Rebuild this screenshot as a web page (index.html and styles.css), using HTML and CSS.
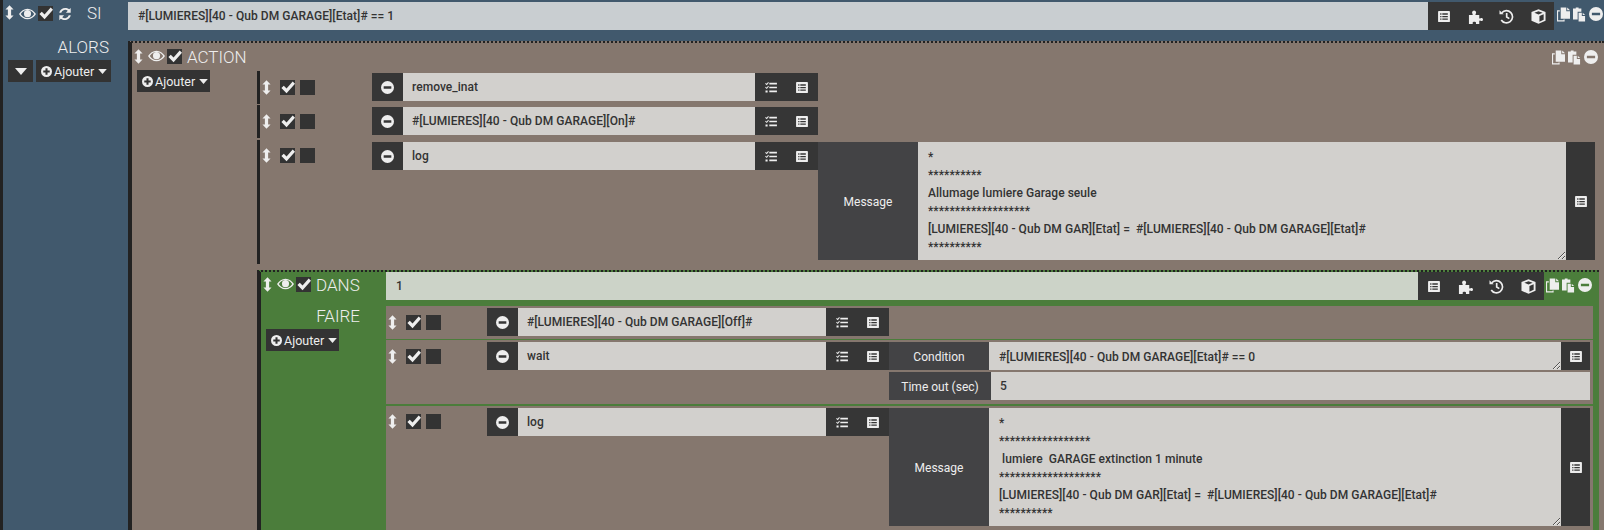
FILE: index.html
```html
<!DOCTYPE html>
<html lang="fr">
<head>
<meta charset="utf-8">
<title>Scénario</title>
<link rel="stylesheet" href="styles.css">
</head>
<body>
<svg class="defs" aria-hidden="true">
  <symbol id="i-handle" viewBox="0 0 10 16"><path d="M5 0 9.500 4.800H6.800v6.400h2.700L5 16 .5 11.200h2.700V4.800H.5z"/></symbol>
  <symbol id="i-eye" viewBox="0 0 24 16"><path fill-rule="evenodd" d="M12 .5C7 .5 3 3.500 0 8c3 4.500 7 7.500 12 7.500S21 12.500 24 8C21 3.500 17 .5 12 .5zM12 2.300c4 0 7 2.200 9.500 5.700-2.500 3.500-5.500 5.700-9.500 5.700S5 11.500 2.500 8C5 4.500 8 2.300 12 2.300z"/><circle cx="12" cy="7.500" r="5"/></symbol>
  <symbol id="i-check" viewBox="0 0 16 16"><path d="M1.500 8.500 4 6l3 3 6.500-7.500L16 4l-9 10z"/></symbol>
  <symbol id="i-refresh" viewBox="0 0 16 16"><path d="M14.500 1v5.500H9l2.200-2.200A4.700 4.700 0 0 0 3.700 6.500H1.400A7 7 0 0 1 12.800 2.700zM1.500 15V9.500H7l-2.200 2.200a4.700 4.700 0 0 0 7.500-2.200h2.300A7 7 0 0 1 3.200 13.300z"/></symbol>
  <symbol id="i-minus" viewBox="0 0 16 16"><path fill-rule="evenodd" d="M8 0a8 8 0 1 0 0 16A8 8 0 0 0 8 0zM3.300 6.500h9.400v3H3.300z"/></symbol>
  <symbol id="i-plus" viewBox="0 0 16 16"><path fill-rule="evenodd" d="M8 0a8 8 0 1 0 0 16A8 8 0 0 0 8 0zM6.500 3.300h3v3.200h3.200v3H9.500v3.200h-3V9.500H3.300v-3h3.200z"/></symbol>
  <symbol id="i-caret" viewBox="0 0 12 7"><path d="M0 0h12L6 7z"/></symbol>
  <symbol id="i-list" viewBox="0 0 14 13"><path fill-rule="evenodd" d="M1 0h12a1 1 0 0 1 1 1v11a1 1 0 0 1-1 1H1a1 1 0 0 1-1-1V1a1 1 0 0 1 1-1zM2.500 2.800v1.500H4V2.800zM5 2.800v1.500h6.500V2.800zM2.500 5.800v1.500H4V5.800zM5 5.800v1.500h6.500V5.800zM2.500 8.800v1.500H4V8.800zM5 8.800v1.500h6.500V8.800z"/></symbol>
  <symbol id="i-tasks" viewBox="0 0 14 13"><path d="M5 1h9v2H5zM5 5.500h9v2H5zM5 10h9v2H5zM0 2l1 -.8 1 1L3.500 0l1 .8L2 3.700zM0 6.500l1-.8 1 1L3.500 4.500l1 .8L2 8.200zM.5 10h2.500v2.500H.5z"/></symbol>
  <symbol id="i-puzzle" viewBox="0 0 16 16"><path d="M1 6.500h3.300c.9 0 .9-.9.4-1.500C3.900 4 4.400 1.500 6.500 1.500S9.100 4 8.300 5c-.5.6-.5 1.500.4 1.500H12v3c0 .8.900.8 1.400.4.900-.7 2.600-.3 2.600 1.300s-1.700 2-2.600 1.300c-.5-.4-1.400-.4-1.400.4V16H8.500v-1.500c0-1.300-3.500-1.300-3.500 0V16H1z"/></symbol>
  <symbol id="i-history" viewBox="0 0 16 16"><path d="M.5 1.200 5 5.700H.5z"/><path class="line" d="M3 4a6.500 6.500 0 1 1-.6 7.700M8.200 4.200v4.300l2.800 1.800"/></symbol>
  <symbol id="i-cube" viewBox="0 0 16 16"><path fill-rule="evenodd" d="M8 .3 15.500 3.300v9.300L8 15.700.5 12.600V3.300zM8 2.300 3.600 4 8 5.800 12.400 4zM9 7.500v6l4.500-2V5.700z"/></symbol>
  <symbol id="i-copy" viewBox="0 0 14 15"><path d="M4 0h6v4h4v8H4z"/><path d="M11 0l3 3h-3z"/><path d="M0 3h3v1.200H1.200v9.600H7V13h1.200v2H0z"/></symbol>
  <symbol id="i-paste" viewBox="0 0 14 15"><path d="M0 1h3V0h3v1h3v3.500H5V13H0z"/><path d="M6 5.500h3.500V9H13v6H6z"/><path d="M10.500 5.500 13 8h-2.500z"/></symbol>
</svg>

<div class="page">
  <div class="si-row">
    <div class="si-ctrl">
      <svg class="ic handle"><use href="#i-handle"/></svg>
      <svg class="ic eye"><use href="#i-eye"/></svg>
      <span class="box"><svg class="ic"><use href="#i-check"/></svg></span>
      <svg class="ic refresh"><use href="#i-refresh"/></svg>
      <span class="si-label">SI</span>
    </div>
    <div class="field field-si">#[LUMIERES][40 - Qub DM GARAGE][Etat]# == 1</div>
    <div class="btns four">
      <span class="btn"><svg class="ic i-sm"><use href="#i-list"/></svg></span>
      <span class="btn"><svg class="ic i-md"><use href="#i-puzzle"/></svg></span>
      <span class="btn"><svg class="ic i-md"><use href="#i-history"/></svg></span>
      <span class="btn"><svg class="ic i-md"><use href="#i-cube"/></svg></span>
    </div>
    <div class="tools tools-si">
      <svg class="ic tool"><use href="#i-copy"/></svg>
      <svg class="ic tool"><use href="#i-paste"/></svg>
      <svg class="ic tool"><use href="#i-minus"/></svg>
    </div>
  </div>

  <div class="alors-row">
    <div class="alors-side">
      <div class="alors-label">ALORS</div>
      <div class="alors-btns">
        <span class="pill pill-caret"><svg class="ic caret-lg"><use href="#i-caret"/></svg></span>
        <span class="pill pill-add pill-wide"><svg class="ic plus"><use href="#i-plus"/></svg>Ajouter<svg class="ic caret"><use href="#i-caret"/></svg></span>
      </div>
    </div>

    <div class="action-block">
      <div class="action-head">
        <svg class="ic handle"><use href="#i-handle"/></svg>
        <svg class="ic eye"><use href="#i-eye"/></svg>
        <span class="box"><svg class="ic"><use href="#i-check"/></svg></span>
        <span class="action-title">ACTION</span>
        <div class="tools tools-action">
          <svg class="ic tool"><use href="#i-copy"/></svg>
          <svg class="ic tool"><use href="#i-paste"/></svg>
          <svg class="ic tool"><use href="#i-minus"/></svg>
        </div>
      </div>
      <div class="action-body">
        <div class="action-side">
          <span class="pill pill-add"><svg class="ic plus"><use href="#i-plus"/></svg>Ajouter<svg class="ic caret"><use href="#i-caret"/></svg></span>
        </div>
        <div class="action-list">
          <div class="row row-a row-short">
            <div class="row-ctrl">
              <svg class="ic handle"><use href="#i-handle"/></svg>
              <span class="box"><svg class="ic"><use href="#i-check"/></svg></span>
              <span class="box"></span>
            </div>
            <div class="cmd">
              <span class="btn btn-minus"><svg class="ic i-sm2"><use href="#i-minus"/></svg></span>
              <div class="field field-cmd">remove_inat</div>
              <div class="btns two">
                <span class="btn"><svg class="ic i-sm"><use href="#i-tasks"/></svg></span>
                <span class="btn"><svg class="ic i-sm"><use href="#i-list"/></svg></span>
              </div>
            </div>
          </div>
          <div class="row row-a row-short gap1">
            <div class="row-ctrl">
              <svg class="ic handle"><use href="#i-handle"/></svg>
              <span class="box"><svg class="ic"><use href="#i-check"/></svg></span>
              <span class="box"></span>
            </div>
            <div class="cmd">
              <span class="btn btn-minus"><svg class="ic i-sm2"><use href="#i-minus"/></svg></span>
              <div class="field field-cmd">#[LUMIERES][40 - Qub DM GARAGE][On]#</div>
              <div class="btns two">
                <span class="btn"><svg class="ic i-sm"><use href="#i-tasks"/></svg></span>
                <span class="btn"><svg class="ic i-sm"><use href="#i-list"/></svg></span>
              </div>
            </div>
          </div>
          <div class="row row-a row-log gap2">
            <div class="row-ctrl tight">
              <svg class="ic handle"><use href="#i-handle"/></svg>
              <span class="box"><svg class="ic"><use href="#i-check"/></svg></span>
              <span class="box"></span>
            </div>
            <div class="cmd">
              <span class="btn btn-minus"><svg class="ic i-sm2"><use href="#i-minus"/></svg></span>
              <div class="field field-cmd">log</div>
              <div class="btns two">
                <span class="btn"><svg class="ic i-sm"><use href="#i-tasks"/></svg></span>
                <span class="btn"><svg class="ic i-sm"><use href="#i-list"/></svg></span>
              </div>
            </div>
            <div class="opts opts-a">
              <div class="opt opt-msg-a">
                <span class="opt-label">Message</span>
                <textarea class="area" spellcheck="false">*
**********
Allumage lumiere Garage seule
*******************
[LUMIERES][40 - Qub DM GAR][Etat] =  #[LUMIERES][40 - Qub DM GARAGE][Etat]#
**********</textarea>
                <span class="btn btn-side"><svg class="ic i-sm"><use href="#i-list"/></svg></span>
              </div>
            </div>
          </div>

          <div class="dans-block">
            <div class="dans-side">
              <div class="dans-head">
                <svg class="ic handle"><use href="#i-handle"/></svg>
                <svg class="ic eye"><use href="#i-eye"/></svg>
                <span class="box"><svg class="ic"><use href="#i-check"/></svg></span>
                <span class="action-title">DANS</span>
              </div>
              <div class="faire-label">FAIRE</div>
              <span class="pill pill-add"><svg class="ic plus"><use href="#i-plus"/></svg>Ajouter<svg class="ic caret"><use href="#i-caret"/></svg></span>
            </div>
            <div class="dans-main">
              <div class="dans-top">
                <div class="field field-dans">1</div>
                <div class="btns four">
                  <span class="btn"><svg class="ic i-sm"><use href="#i-list"/></svg></span>
                  <span class="btn"><svg class="ic i-md"><use href="#i-puzzle"/></svg></span>
                  <span class="btn"><svg class="ic i-md"><use href="#i-history"/></svg></span>
                  <span class="btn"><svg class="ic i-md"><use href="#i-cube"/></svg></span>
                </div>
                <div class="tools tools-dans">
                  <svg class="ic tool"><use href="#i-copy"/></svg>
                  <svg class="ic tool"><use href="#i-paste"/></svg>
                  <svg class="ic tool"><use href="#i-minus"/></svg>
                </div>
              </div>
              <div class="dans-list">
                <div class="row row-d row-d1">
                  <div class="row-ctrl">
                    <svg class="ic handle"><use href="#i-handle"/></svg>
                    <span class="box"><svg class="ic"><use href="#i-check"/></svg></span>
                    <span class="box"></span>
                  </div>
                  <div class="cmd">
                    <span class="btn btn-minus"><svg class="ic i-sm2"><use href="#i-minus"/></svg></span>
                    <div class="field field-cmd">#[LUMIERES][40 - Qub DM GARAGE][Off]#</div>
                    <div class="btns two">
                      <span class="btn"><svg class="ic i-sm"><use href="#i-tasks"/></svg></span>
                      <span class="btn"><svg class="ic i-sm"><use href="#i-list"/></svg></span>
                    </div>
                  </div>
                </div>
                <div class="row row-d row-d2">
                  <div class="row-ctrl">
                    <svg class="ic handle"><use href="#i-handle"/></svg>
                    <span class="box"><svg class="ic"><use href="#i-check"/></svg></span>
                    <span class="box"></span>
                  </div>
                  <div class="cmd">
                    <span class="btn btn-minus"><svg class="ic i-sm2"><use href="#i-minus"/></svg></span>
                    <div class="field field-cmd">wait</div>
                    <div class="btns two">
                      <span class="btn"><svg class="ic i-sm"><use href="#i-tasks"/></svg></span>
                      <span class="btn"><svg class="ic i-sm"><use href="#i-list"/></svg></span>
                    </div>
                  </div>
                  <div class="opts opts-d">
                    <div class="opt opt-cond">
                      <span class="opt-label">Condition</span>
                      <textarea class="area area-one" spellcheck="false">#[LUMIERES][40 - Qub DM GARAGE][Etat]# == 0</textarea>
                      <span class="btn btn-side"><svg class="ic i-sm"><use href="#i-list"/></svg></span>
                    </div>
                    <div class="opt opt-time">
                      <span class="opt-label opt-label-wide">Time out (sec)</span>
                      <div class="field field-cmd">5</div>
                    </div>
                  </div>
                </div>
                <div class="row row-d row-d3">
                  <div class="row-ctrl tight">
                    <svg class="ic handle"><use href="#i-handle"/></svg>
                    <span class="box"><svg class="ic"><use href="#i-check"/></svg></span>
                    <span class="box"></span>
                  </div>
                  <div class="cmd">
                    <span class="btn btn-minus"><svg class="ic i-sm2"><use href="#i-minus"/></svg></span>
                    <div class="field field-cmd">log</div>
                    <div class="btns two">
                      <span class="btn"><svg class="ic i-sm"><use href="#i-tasks"/></svg></span>
                      <span class="btn"><svg class="ic i-sm"><use href="#i-list"/></svg></span>
                    </div>
                  </div>
                  <div class="opts opts-d">
                    <div class="opt opt-msg-d">
                      <span class="opt-label">Message</span>
                      <textarea class="area" spellcheck="false">*
*****************
 lumiere  GARAGE extinction 1 minute
*******************
[LUMIERES][40 - Qub DM GAR][Etat] =  #[LUMIERES][40 - Qub DM GARAGE][Etat]#
**********</textarea>
                      <span class="btn btn-side"><svg class="ic i-sm"><use href="#i-list"/></svg></span>
                    </div>
                  </div>
                </div>
              </div>
            </div>
          </div>
        </div>
      </div>
    </div>
  </div>
</div>
</body>
</html>
```

FILE: styles.css
```css
* { box-sizing: border-box; }
html, body { margin: 0; height: 530px; overflow: hidden; }
body { background: #41596d; font-family: Roboto, "Liberation Sans", sans-serif; font-size: 12px; color: #eee; }
.defs { display: none; }
.page { border-left: 3px solid #222; height: 530px; overflow: hidden; }

.ic { display: block; fill: #eee; flex: none; }
.line { fill: none; stroke: #eee; stroke-width: 1.8; }
.handle { width: 9px; height: 15px; }
.eye { width: 17px; height: 12px; }
.refresh { width: 14px; height: 14px; }
.i-sm { width: 12px; height: 11px; }
.i-md { width: 15px; height: 15px; }
.i-sm2 { width: 13px; height: 13px; }
.tool { width: 13px; height: 15px; }
.tool:last-child { width: 14px; height: 14px; }
.plus { width: 11px; height: 11px; margin-right: 2px; }
.caret { width: 9px; height: 5px; margin-left: 4px; }
.caret-lg { width: 12px; height: 7px; }

.box { width: 15px; height: 15px; background: #333; display: flex; align-items: center; justify-content: center; flex: none; }
.box .ic { width: 15px; height: 15px; }

.btn { display: flex; align-items: center; justify-content: center; background: #363636; }
.btns { display: flex; flex: none; height: 28px; background: #363636; }
.btns .btn { flex: 1; }
.btns.four { width: 126px; }
.btns.two { width: 63px; }
.btn-minus { width: 31px; height: 28px; flex: none; }

.field { height: 28px; line-height: 29px; padding-left: 10px; font-size: 12px; font-weight: 500; letter-spacing: .05px; color: #333; white-space: nowrap; overflow: hidden; }
.field-si { flex: 1; background: #c9ced1; }
.field-cmd { flex: 1; background: #d2d0cd; padding-left: 9px; }
.field-dans { flex: 1; background: #ccd3c8; }

.si-row { display: flex; padding-top: 2px; height: 30px; }
.si-ctrl { width: 125px; flex: none; display: flex; align-items: flex-start; padding: 4px 0 0 2px; }
.si-ctrl .handle { margin-top: -1px; }
.si-ctrl .eye { margin: 2px 0 0 5px; }
.si-ctrl .box { margin-left: 2px; }
.si-ctrl .refresh { margin: 1px 0 0 5px; }
.si-label { font-size: 17px; font-weight: 300; margin: -2px 0 0 15px; line-height: 19px; }
.tools { display: flex; gap: 3px; }
.tools-si { width: 50px; padding: 5px 0 0 3px; }

.alors-row { display: flex; margin-top: 11px; height: 489px; }
.alors-side { width: 125px; flex: none; }
.alors-label { font-size: 17px; font-weight: 300; text-align: right; padding-right: 19px; line-height: 19px; margin-top: -3px; }
.alors-btns { display: flex; gap: 3px; padding-left: 5px; margin-top: 3px; }
.pill { display: inline-flex; align-items: center; height: 22px; background: #333; color: #eee; font-size: 12.500px; padding-top: 1px; }
.pill-add { width: 73px; padding-left: 5px; }
.pill-wide { width: 75px; }
.pill-caret { width: 25px; justify-content: center; }

.action-block { flex: 1; border-top: 2px dotted #222; border-left: 4px solid #222; background: #85776e; display: flex; flex-direction: column; min-width: 0; }
.action-head { display: flex; align-items: flex-start; height: 27px; padding: 6px 0 0 2px; }
.action-head .eye { margin: 1px 0 0 5px; }
.action-head .box { margin-left: 2px; }
.action-title { font-size: 17px; font-weight: 300; margin: -1px 0 0 5px; line-height: 18px; color: #eee; }
.tools-action { margin-left: auto; margin-right: 6px; padding-top: 1px; }

.action-body { display: flex; flex: 1; min-height: 0; }
.action-side { width: 125px; flex: none; padding-left: 5px; }
.action-list { flex: 1; min-width: 0; margin-top: 1px; }

.row { display: flex; align-items: flex-start; }
.row-a { border-left: 3px solid #222; padding-top: 2px; }
.row-short { height: 33px; }
.row-log { height: 124px; }
.gap1 { margin-top: 1px; }
.gap2 { margin-top: 2px; }

.row-ctrl { display: flex; flex: none; padding-left: 2px; padding-top: 7px; }
.row-ctrl.tight { padding-top: 6px; }
.row-ctrl .handle { margin-right: 9px; }
.row-ctrl .box + .box { margin-left: 5px; }
.row-a .row-ctrl { width: 112px; }
.row-d .row-ctrl { width: 101px; }

.cmd { display: flex; flex: none; }
.row-a .cmd { width: 446px; }
.row-d .cmd { width: 402px; }

.opts { display: flex; flex-direction: column; gap: 2px; }
.opts-a { width: 777px; }
.opts-d { width: 701px; }
.opt { display: flex; }
.opt-msg-a { height: 118px; }
.opt-msg-d { height: 118px; }
.opt-cond, .opt-time { height: 28px; }
.opt-label { width: 100px; flex: none; display: flex; align-items: center; justify-content: center; background: #434345; color: #eee; font-size: 12px; padding-top: 1px; }
.opt-label-wide { width: 102px; }
.btn-side { width: 29px; flex: none; }
.area { flex: 1; min-width: 0; display: block; height: 100%; margin: 0; border: 0; outline: 0; border-radius: 0; background: #d2d0cd; color: #333; font: 500 12px/18px Roboto, "Liberation Sans", sans-serif; letter-spacing: .05px; padding: 6px 10px 0; overflow-y: scroll; overflow-x: hidden; resize: vertical; }
.area::-webkit-scrollbar { width: 3px; background: #c6c6c4; }

.dans-block { display: flex; margin-top: 6px; margin-right: 5px; height: 260px; border-top: 2px dotted #222; border-left: 4px solid #222; background: #4b7d3b; }
.dans-side { width: 125px; flex: none; }
.dans-head { display: flex; align-items: flex-start; padding: 5px 0 0 2px; height: 28px; }
.dans-head .eye { margin: 1px 0 0 5px; }
.dans-head .box { margin-left: 2px; }
.faire-label { font-size: 17px; font-weight: 300; text-align: right; padding-right: 26px; line-height: 18px; margin-top: 7px; }
.dans-side .pill-add { margin: 4px 0 0 5px; }
.dans-main { flex: 1; min-width: 0; }
.dans-top { display: flex; height: 28px; }
.tools-dans { width: 55px; padding: 6px 0 0 2px; }
.dans-list { margin-top: 6px; margin-right: 6px; background: #85776e; }
.row-d { padding-top: 2px; }
.row-d1 { height: 34px; border-bottom: 1px solid #4b7d3b; }
.row-d2 { height: 64px; }
.row-d3 { height: 130px; border-top: 2px solid #4b7d3b; }
```
